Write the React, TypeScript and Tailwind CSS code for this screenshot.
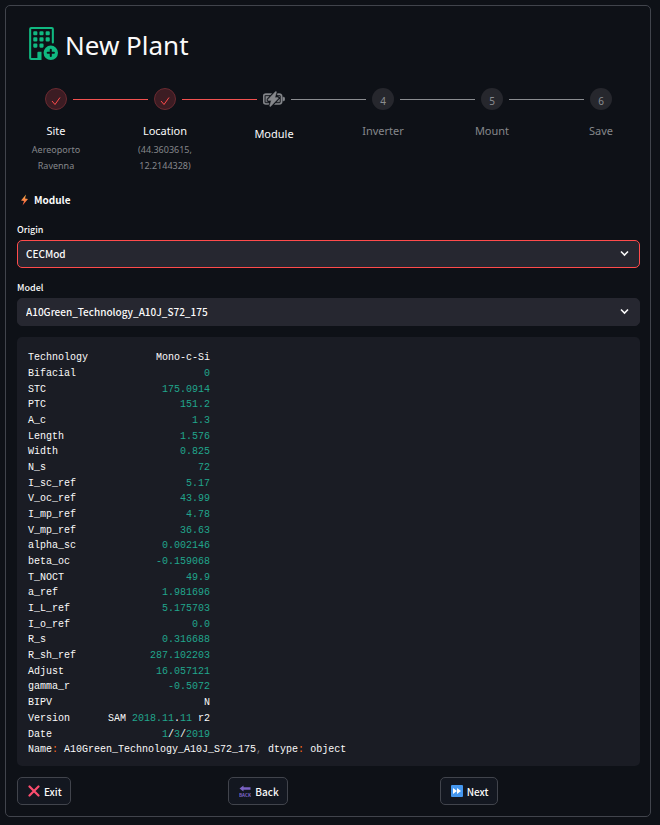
import { Fragment, type ReactNode } from "react";
import { BsBuildingAdd, BsBatteryCharging } from "react-icons/bs";

type Step = { label: string; detail?: string; state: "done" | "active" | "todo" };

const steps: Step[] = [
  { label: "Site", detail: "Aereoporto Ravenna", state: "done" },
  { label: "Location", detail: "(44.3603615, 12.2144328)", state: "done" },
  { label: "Module", state: "active" },
  { label: "Inverter", state: "todo" },
  { label: "Mount", state: "todo" },
  { label: "Save", state: "todo" },
];

const num = (s: string) => <span className="text-[#21a58c]">{s}</span>;

const rows: [string, ReactNode][] = [
  ["Technology", "Mono-c-Si"],
  ["Bifacial", num("0")],
  ["STC", num("175.0914")],
  ["PTC", num("151.2")],
  ["A_c", num("1.3")],
  ["Length", num("1.576")],
  ["Width", num("0.825")],
  ["N_s", num("72")],
  ["I_sc_ref", num("5.17")],
  ["V_oc_ref", num("43.99")],
  ["I_mp_ref", num("4.78")],
  ["V_mp_ref", num("36.63")],
  ["alpha_sc", num("0.002146")],
  ["beta_oc", num("-0.159068")],
  ["T_NOCT", num("49.9")],
  ["a_ref", num("1.981696")],
  ["I_L_ref", num("5.175703")],
  ["I_o_ref", num("0.0")],
  ["R_s", num("0.316688")],
  ["R_sh_ref", num("287.102203")],
  ["Adjust", num("16.057121")],
  ["gamma_r", num("-0.5072")],
  ["BIPV", "N"],
  ["Version", <>SAM {num("2018.11")}.{num("11")} r2</>],
  ["Date", <>{num("1")}/{num("3")}/{num("2019")}</>],
];

function StepMarker({ step, index }: { step: Step; index: number }) {
  if (step.state === "active") {
    return (
      <span className="flex h-[22px] w-[22px] items-center justify-center text-[#85878b]">
        <BsBatteryCharging size={22} stroke="currentColor" strokeWidth={0.3} aria-hidden="true" />
      </span>
    );
  }
  if (step.state === "done") {
    return (
      <span className="flex h-[22px] w-[22px] items-center justify-center rounded-full border border-[#6a2a31] bg-[#3c1c23] pt-[3px] text-[#ff4b4b]">
        <svg width="10" height="10" viewBox="0 0 10 10" fill="none" stroke="currentColor" aria-hidden="true">
          <path d="M1 5 L4 8.5 L9 1.5" />
        </svg>
      </span>
    );
  }
  return (
    <span className="flex h-[22px] w-[22px] items-center justify-center rounded-full bg-[#26272d] pt-1 text-[10px] text-[#8b8d91]">
      {index + 1}
    </span>
  );
}

function Stepper() {
  return (
    <nav aria-label="Progress" className="font-['Noto_Sans',sans-serif]">
      <div className="flex items-center gap-[6px] px-7">
        {steps.map((step, i) => (
          <Fragment key={step.label}>
            {i > 0 && <span className={`h-px flex-1 ${i < 3 ? "bg-[#f0514f]" : "bg-[#8b8d91]"}`} />}
            <StepMarker step={step} index={i} />
          </Fragment>
        ))}
      </div>
      <ol className="mt-[11px] flex h-[63px] justify-between text-center">
        {steps.map((step) => (
          <li key={step.label} className={`w-[78px] ${step.state === "active" ? "pt-[3px]" : ""}`}>
            <div className={`text-[11px] leading-5 ${step.state === "todo" ? "text-[#85878b]" : "text-[#fafafa]"}`}>
              {step.label}
            </div>
            {step.detail && <div className="mt-px px-2 text-[9px] leading-4 text-[#85878b]">{step.detail}</div>}
          </li>
        ))}
      </ol>
    </nav>
  );
}

function SelectField({ id, label, value, focused }: { id: string; label: string; value: string; focused?: boolean }) {
  return (
    <div>
      <label htmlFor={id} className="block text-[9px] leading-4 font-medium">
        {label}
      </label>
      <div className="relative mt-[2px]">
        <select
          id={id}
          defaultValue={value}
          className={`block h-7 w-full appearance-none rounded-[5px] border bg-[#262730] pr-8 pb-[2px] pl-2 text-[10px] font-medium text-[#fafafa] outline-none ${focused ? "border-[#ff4b4b]" : "border-[#262730]"}`}
        >
          <option>{value}</option>
        </select>
        <svg className="pointer-events-none absolute right-[11px] top-[10px]" width="9" height="7" viewBox="0 0 9 7" fill="none" stroke="#fafafa" strokeWidth="1.6" aria-hidden="true">
          <path d="M1 1.5 L4.5 5 L8 1.5" />
        </svg>
      </div>
    </div>
  );
}

function ActionButton({ icon, children }: { icon: ReactNode; children: string }) {
  return (
    <button
      type="button"
      className="flex h-7 items-center gap-1 rounded-[5px] border border-[#41444c] bg-[#131720] pr-2 pl-[10px] text-[10px] font-medium"
    >
      {icon}
      {children}
    </button>
  );
}

export default function App() {
  return (
    <div className="bg-[#0e1117] pt-[5px] pr-[9px] pb-2 pl-[5px] font-['Noto_Sans_CJK_SC',sans-serif] text-[#fafafa]">
      <main className="rounded-[5px] border border-[#41444c] pr-[10px] pb-[11px] pl-[11px]">
        <header className="flex items-start gap-[7px] pt-[21px] pl-2">
          <BsBuildingAdd size={33} color="#10b981" aria-hidden="true" />
          <h1 className="font-['Noto_Sans',sans-serif] text-[26px] leading-9">New Plant</h1>
        </header>

        <div className="mt-[25px]">
          <Stepper />
        </div>

        <h2 className="mt-[8px] flex items-center gap-[5px] pl-[3px] text-[10px] leading-4 font-bold">
          <svg width="9" height="12" viewBox="0 0 9 12" aria-hidden="true">
            <defs>
              <linearGradient id="bolt" x1="0" y1="0" x2="0" y2="1">
                <stop offset="0" stopColor="#ffb648" />
                <stop offset="1" stopColor="#f4513f" />
              </linearGradient>
            </defs>
            <path d="M6 0.5 L1 6.5 L4 7 L2.5 11.5 L8 5 L5 4.6 Z" fill="url(#bolt)" />
          </svg>
          Module
        </h2>

        <div className="mt-[14px]">
          <SelectField id="origin" label="Origin" value="CECMod" focused />
        </div>
        <div className="mt-3">
          <SelectField id="model" label="Model" value="A10Green_Technology_A10J_S72_175" />
        </div>

        <section className="mt-[11px] rounded-[5px] bg-[#1a1c24] px-[11px] pt-[13px] pb-2 font-['Liberation_Mono',monospace] text-[10px]">
          <table className="h-[392px] w-[182px] border-collapse">
            <tbody>
              {rows.map(([name, value]) => (
                <tr key={name} className="leading-[15px]">
                  <th scope="row" className="p-0 text-left font-normal">{name}</th>
                  <td className="p-0 text-right whitespace-nowrap">{value}</td>
                </tr>
              ))}
            </tbody>
          </table>
          <p className="leading-4">
            Name<span className="text-[#ff6a1a]">:</span> A10Green_Technology_A10J_S72_175
            <span className="text-[#7d7f85]">,</span> dtype<span className="text-[#ff6a1a]">:</span> object
          </p>
        </section>

        <div className="mt-[11px] grid grid-cols-3 gap-[11px]">
          <div>
            <ActionButton
              icon={
                <svg width="12" height="12" viewBox="0 0 12 12" stroke="#fa4d6e" strokeWidth="2.2" strokeLinecap="round" aria-hidden="true">
                  <path d="M1.5 1.5 L10.5 10.5 M10.5 1.5 L1.5 10.5" />
                </svg>
              }
            >
              Exit
            </ActionButton>
          </div>
          <div>
            <ActionButton
              icon={
                <svg width="12" height="12" viewBox="0 0 12 12" aria-hidden="true">
                  <path d="M0.5 3.5 L4.5 0.5 V2.2 H11.5 V4.8 H4.5 V6.5 Z" fill="#7a62c4" />
                  <text x="6" y="11.5" textAnchor="middle" fontSize="4.6" fontWeight="700" fill="#7a62c4">BACK</text>
                </svg>
              }
            >
              Back
            </ActionButton>
          </div>
          <div>
            <ActionButton
              icon={
                <svg width="12" height="12" viewBox="0 0 12 12" aria-hidden="true">
                  <rect width="12" height="12" rx="1" fill="#4597ef" />
                  <path d="M2 3 L6 6 L2 9 Z M6 3 L10 6 L6 9 Z" fill="#fff" />
                </svg>
              }
            >
              Next
            </ActionButton>
          </div>
        </div>
      </main>
    </div>
  );
}
